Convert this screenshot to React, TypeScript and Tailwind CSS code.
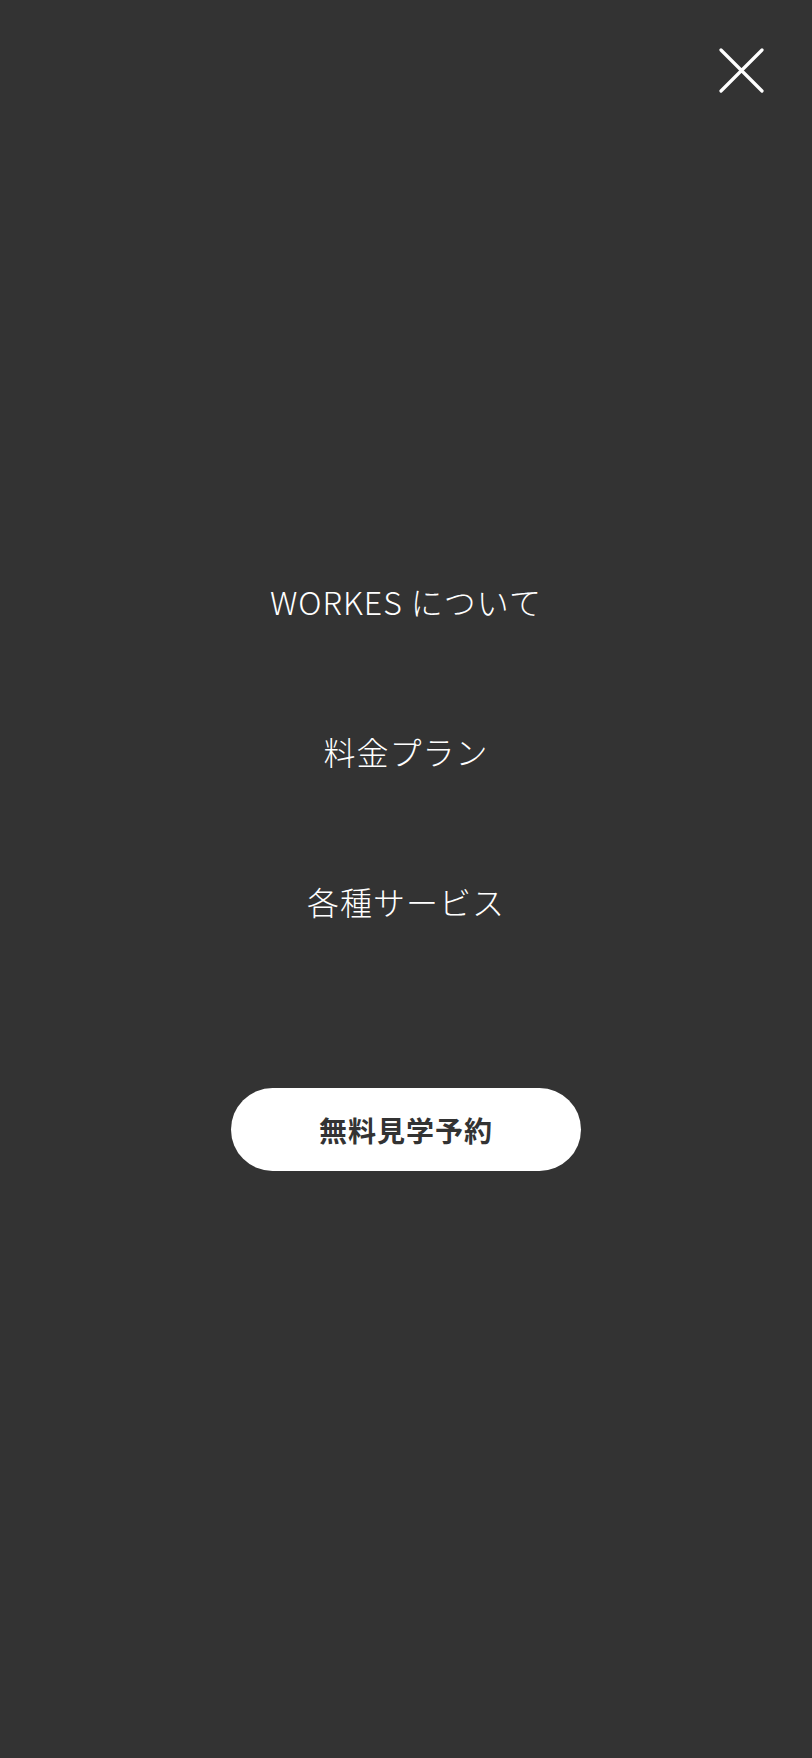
const menuItems = ["WORKES について", "料金プラン", "各種サービス"];

export default function App() {
  return (
    <div
      className="relative flex h-screen w-full flex-col items-center justify-center bg-[#333333] pb-[10px] text-white"
      style={{ fontFamily: '"Noto Sans CJK JP", "Noto Sans", sans-serif' }}
    >
      {/* Close button */}
      <button className="absolute right-[48px] top-[48px] h-[45px] w-[45px]" aria-label="close">
        <svg viewBox="0 0 45 45" className="h-full w-full">
          <path d="M2 2 L43 43 M43 2 L2 43" stroke="#ffffff" strokeWidth="3.2" strokeLinecap="round" />
        </svg>
      </button>

      {/* Menu */}
      <nav className="flex flex-col items-center gap-[102px]">
        {menuItems.map((item) => (
          <a key={item} className="text-[32px] leading-[48px] font-light tracking-[1px] text-white">
            {item}
          </a>
        ))}
      </nav>

      <button className="mt-[163px] flex h-[83px] w-[350px] items-center justify-center rounded-full bg-white text-[28px] font-bold tracking-[1px] text-[#333333]">
        無料見学予約
      </button>
    </div>
  );
}
